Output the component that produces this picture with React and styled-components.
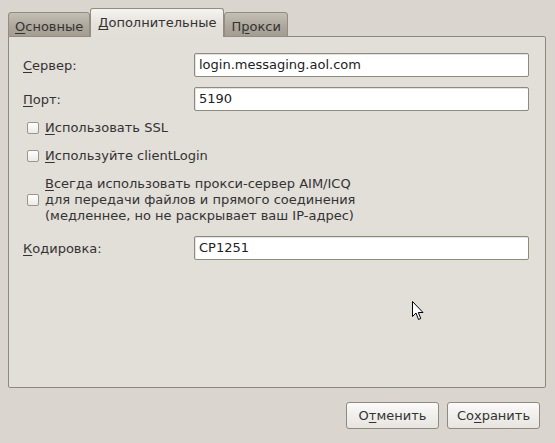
import React from 'react';
import styled, { createGlobalStyle } from 'styled-components';

const GlobalStyle = createGlobalStyle`
  html, body {
    margin: 0;
    padding: 0;
    background: #dad6cf;
  }
  body {
    font-family: 'DejaVu Sans', 'Liberation Sans', sans-serif;
    font-size: 13px;
    color: #333;
  }
`;

const Window = styled.div`
  position: relative;
  width: 555px;
  height: 443px;
  box-sizing: border-box;
  padding: 8px 9px 0 8px;
  background: #dad6cf;
  overflow: hidden;
`;

const TabBar = styled.div`
  display: flex;
  align-items: flex-end;
  height: 29px;
  position: relative;
  z-index: 1;
`;

const Tab = styled.div`
  box-sizing: border-box;
  height: 25px;
  padding: 5px 6px 0 6px;
  border: 1px solid #928d82;
  border-radius: 3px 3px 0 0;
  background-color: #aca69b;
  background-image: linear-gradient(#c4bfb5, #aca69b 60%, #a39d92);
  color: #333;
  white-space: nowrap;
  line-height: 17px;
`;

const ActiveTab = styled(Tab)`
  height: 29px;
  padding: 5px 7px 0 7px;
  border-bottom: none;
  background-color: #e2ded8;
  background-image: linear-gradient(#f6f4f1, #e4e0da 60%, #e2ded8);
`;

const Panel = styled.div`
  box-sizing: border-box;
  height: 352px;
  margin-top: -1px;
  border: 1px solid #8e897e;
  border-radius: 0 2px 2px 2px;
  background: #e2ded8;
  padding: 15px 16px 0 14px;
  display: flex;
  flex-direction: column;
`;

const FieldRow = styled.div`
  display: flex;
  align-items: center;
  height: 24px;
  margin-top: ${p => p.$gap || 0}px;
`;

const Label = styled.label`
  width: 171px;
  flex: none;
`;

const Input = styled.div`
  flex: 1;
  box-sizing: border-box;
  height: 24px;
  border: 1px solid #8f8a80;
  border-radius: 2px;
  background: #fff;
  padding: 0 4px;
  line-height: 22px;
  color: #222;
  box-shadow: inset 1px 1px 0 #e6e3de;
`;

const CheckRow = styled.div`
  display: flex;
  align-items: center;
  margin-top: ${p => p.$gap || 0}px;
  padding-left: 4px;
`;

const Box = styled.span`
  flex: none;
  box-sizing: border-box;
  width: 12px;
  height: 12px;
  border: 1px solid #9b968c;
  border-radius: 2px;
  background: linear-gradient(#ffffff, #eceae6);
  margin-right: 6px;
`;

const CheckText = styled.span`
  line-height: ${p => p.$lh || 20}px;
`;

const Mn = styled.span`
  text-decoration: underline;
  text-underline-offset: 2px;
`;

const Footer = styled.div`
  display: flex;
  justify-content: flex-end;
  gap: 8px;
  padding: 14px 6px 0 0;
`;

const Button = styled.button`
  box-sizing: border-box;
  width: 93px;
  height: 27px;
  border: 1px solid #8f8a80;
  border-radius: 3px;
  background: linear-gradient(#fbfaf9, #f1efec 50%, #e8e5e0);
  font-family: inherit;
  font-size: 13px;
  color: #333;
  padding: 0;
`;

const Pointer = styled.svg`
  position: absolute;
  left: 412px;
  top: 301px;
`;

export default function App() {
  return (
    <Window>
      <GlobalStyle />
      <TabBar>
        <Tab>
          <Mn>О</Mn>сновные
        </Tab>
        <ActiveTab>
          <Mn>Д</Mn>ополнительные
        </ActiveTab>
        <Tab>
          П<Mn>р</Mn>окси
        </Tab>
      </TabBar>
      <Panel>
        <FieldRow $gap={1}>
          <Label>
            <Mn>С</Mn>ервер:
          </Label>
          <Input>login.messaging.aol.com</Input>
        </FieldRow>
        <FieldRow $gap={10}>
          <Label>
            <Mn>П</Mn>орт:
          </Label>
          <Input>5190</Input>
        </FieldRow>
        <CheckRow $gap={7}>
          <Box />
          <CheckText>
            <Mn>И</Mn>спользовать SSL
          </CheckText>
        </CheckRow>
        <CheckRow $gap={8}>
          <Box />
          <CheckText>
            <Mn>И</Mn>спользуйте clientLogin
          </CheckText>
        </CheckRow>
        <CheckRow $gap={10}>
          <Box />
          <CheckText $lh={16}>
            <Mn>В</Mn>сегда использовать прокси-сервер AIM/ICQ
            <br />
            для передачи файлов и прямого соединения
            <br />
            (медленнее, но не раскрывает ваш IP-адрес)
          </CheckText>
        </CheckRow>
        <FieldRow $gap={12}>
          <Label>
            <Mn>К</Mn>одировка:
          </Label>
          <Input>CP1251</Input>
        </FieldRow>
      </Panel>
      <Footer>
        <Button>
          О<Mn>т</Mn>менить
        </Button>
        <Button>
          Со<Mn>х</Mn>ранить
        </Button>
      </Footer>
      <Pointer width="13" height="21" viewBox="0 0 13 21">
        <path
          d="M0.5 0.5 L0.5 15.5 L4 12 L6.5 18.5 L8.8 17.5 L6.3 11.5 L11 11.5 Z"
          fill="#fff"
          stroke="#000"
          strokeWidth="1"
          strokeLinejoin="miter"
        />
      </Pointer>
    </Window>
  );
}
